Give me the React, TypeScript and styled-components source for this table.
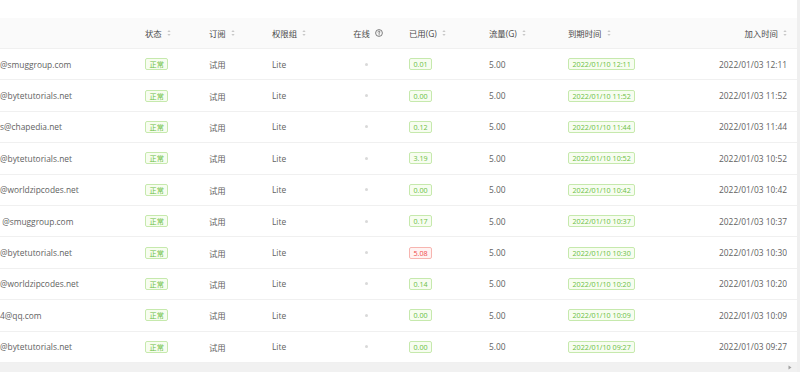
import styled, { createGlobalStyle } from "styled-components";

const GlobalStyle = createGlobalStyle`
  html, body {
    margin: 0;
    padding: 0;
    background: #ffffff;
  }
  body {
    font-family: "Open Sans", "Noto Sans CJK SC", sans-serif;
  }
`;

const Page = styled.div`
  width: 800px;
  height: 372px;
  display: flex;
  overflow: hidden;
  background: #ffffff;
`;

const Main = styled.div`
  flex: 1;
  display: flex;
  flex-direction: column;
  padding-top: 17.5px;
`;

const VTrack = styled.div`
  width: 3px;
  background: #efefef;
`;

const cols = "145px 64px 63px 68px 56px 93px 79px 132px 87px";

const HeadRow = styled.div`
  display: grid;
  grid-template-columns: ${cols};
  height: 31.5px;
  align-items: center;
  background: #fafafa;
  border-bottom: 1px solid #f0f0f0;
  box-sizing: border-box;
`;

const Row = styled.div`
  display: grid;
  grid-template-columns: ${cols};
  height: 31.4px;
  align-items: center;
  border-bottom: 1px solid #f0f0f0;
  box-sizing: border-box;
`;

const Th = styled.div<{ $align?: "left" | "center" | "right"; $pl?: number }>`
  display: flex;
  align-items: center;
  justify-content: ${(p) =>
    p.$align === "center" ? "center" : p.$align === "right" ? "flex-end" : "flex-start"};
  padding-left: ${(p) => p.$pl ?? 0}px;
  gap: 5px;
  font-size: 8.4px;
  color: #4a4a4a;
  white-space: nowrap;
`;

const Td = styled.div<{ $align?: "left" | "center" | "right"; $pl?: number }>`
  display: flex;
  align-items: center;
  justify-content: ${(p) =>
    p.$align === "center" ? "center" : p.$align === "right" ? "flex-end" : "flex-start"};
  padding-left: ${(p) => p.$pl ?? 0}px;
  font-size: 8.4px;
  color: #626262;
  white-space: nowrap;
  overflow: hidden;
`;

const Email = styled(Td)`
  white-space: pre;
`;

const Tag = styled.span<{ $red?: boolean }>`
  display: inline-block;
  font-size: 7.2px;
  line-height: 10px;
  padding: 0 3.5px;
  border-radius: 2px;
  border: 1px solid ${(p) => (p.$red ? "#f7b5b0" : "#c6e9ad")};
  background: ${(p) => (p.$red ? "#fff3f2" : "#f7fdf0")};
  color: ${(p) => (p.$red ? "#ef4a4a" : "#6cbf45")};
`;

const Dot = styled.span`
  display: inline-block;
  width: 3px;
  height: 3px;
  border-radius: 50%;
  background: #d9d9d9;
  margin-right: 4px;
`;

const HScroll = styled.div`
  height: 9px;
  margin-top: auto;
  background: #f1f1f1;
  display: flex;
  align-items: center;
  justify-content: flex-end;
  padding-right: 5px;
`;

const SortIcon = () => (
  <svg width="4" height="8" viewBox="0 0 4 8">
    <path d="M2 1 L3.6 3.1 L0.4 3.1 Z" fill="#c8c8c8" />
    <path d="M2 7 L3.6 4.9 L0.4 4.9 Z" fill="#c8c8c8" />
  </svg>
);

const HelpIcon = () => (
  <svg width="8" height="8" viewBox="0 0 16 16">
    <circle cx="8" cy="8" r="6.8" fill="none" stroke="#555" strokeWidth="1.5" />
    <path
      d="M6 6.2 C6 4.9 7 4.3 8 4.3 C9.1 4.3 10 5 10 6 C10 7.2 8.3 7.4 8.3 8.8 L8.3 9.4"
      fill="none"
      stroke="#555"
      strokeWidth="1.5"
      strokeLinecap="round"
    />
    <circle cx="8.3" cy="11.6" r="1" fill="#555" />
  </svg>
);

const Arrow = () => (
  <svg width="4" height="5" viewBox="0 0 4 5">
    <path d="M0.5 0.5 L3.5 2.5 L0.5 4.5 Z" fill="#a0a0a0" />
  </svg>
);

type User = {
  email: string;
  used: string;
  expire: string;
  join: string;
};

const users: User[] = [
  { email: "@smuggroup.com", used: "0.01", expire: "2022/01/10 12:11", join: "2022/01/03 12:11" },
  { email: "@bytetutorials.net", used: "0.00", expire: "2022/01/10 11:52", join: "2022/01/03 11:52" },
  { email: "s@chapedia.net", used: "0.12", expire: "2022/01/10 11:44", join: "2022/01/03 11:44" },
  { email: "@bytetutorials.net", used: "3.19", expire: "2022/01/10 10:52", join: "2022/01/03 10:52" },
  { email: "@worldzipcodes.net", used: "0.00", expire: "2022/01/10 10:42", join: "2022/01/03 10:42" },
  { email: " @smuggroup.com", used: "0.17", expire: "2022/01/10 10:37", join: "2022/01/03 10:37" },
  { email: "@bytetutorials.net", used: "5.08", expire: "2022/01/10 10:30", join: "2022/01/03 10:30" },
  { email: "@worldzipcodes.net", used: "0.14", expire: "2022/01/10 10:20", join: "2022/01/03 10:20" },
  { email: "4@qq.com", used: "0.00", expire: "2022/01/10 10:09", join: "2022/01/03 10:09" },
  { email: "@bytetutorials.net", used: "0.00", expire: "2022/01/10 09:27", join: "2022/01/03 09:27" },
];

function App() {
  return (
    <>
      <GlobalStyle />
      <Page>
        <Main>
          <HeadRow>
            <Th />
            <Th>状态 <SortIcon /></Th>
            <Th>订阅 <SortIcon /></Th>
            <Th>权限组 <SortIcon /></Th>
            <Th $align="center">在线 <HelpIcon /></Th>
            <Th $pl={13}>已用(G) <SortIcon /></Th>
            <Th>流量(G) <SortIcon /></Th>
            <Th>到期时间 <SortIcon /></Th>
            <Th $align="right">加入时间 <SortIcon /></Th>
          </HeadRow>
          {users.map((u, i) => (
            <Row key={i}>
              <Email>{u.email}</Email>
              <Td><Tag>正常</Tag></Td>
              <Td>试用</Td>
              <Td>Lite</Td>
              <Td $align="center"><Dot /></Td>
              <Td $pl={13}><Tag $red={parseFloat(u.used) > 5}>{u.used}</Tag></Td>
              <Td>5.00</Td>
              <Td><Tag>{u.expire}</Tag></Td>
              <Td $align="right">{u.join}</Td>
            </Row>
          ))}
          <HScroll>
            <Arrow />
          </HScroll>
        </Main>
        <VTrack />
      </Page>
    </>
  );
}

export default App;
